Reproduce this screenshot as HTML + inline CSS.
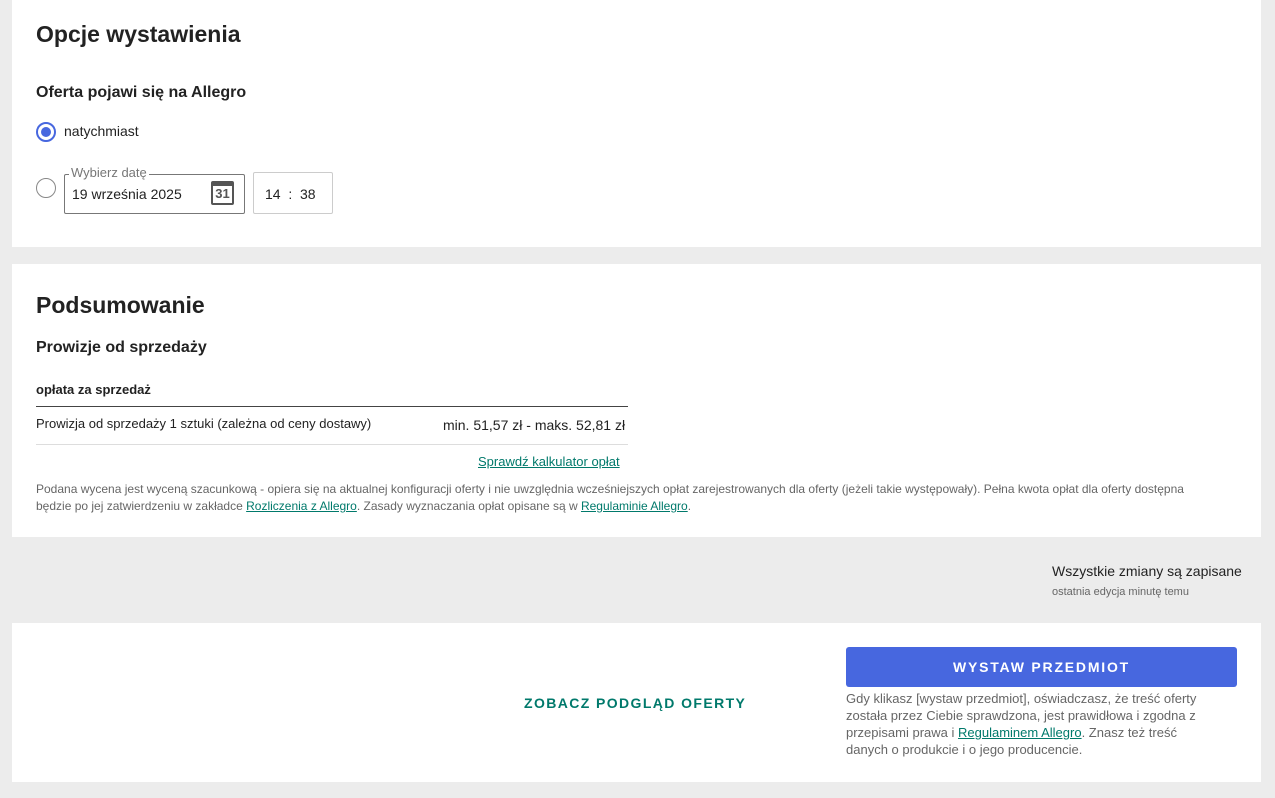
<!DOCTYPE html>
<html><head><meta charset="utf-8"><style>
*{box-sizing:border-box;margin:0;padding:0}
body{width:1275px;height:798px;background:#ececec;font-family:"Liberation Sans",sans-serif;color:#222;position:relative;overflow:hidden}
.card{position:absolute;left:12px;width:1249px;background:#fff}
.a{position:absolute;white-space:nowrap}
h1{position:absolute;font-size:23px;font-weight:bold;color:#222}
h2{position:absolute;font-size:16px;font-weight:bold;color:#222}
a{color:#00796b;text-decoration:underline}
</style></head><body>
<div class="card" style="top:0;height:247px">
<h1 style="left:24px;top:21px">Opcje wystawienia</h1>
<h2 style="left:24px;top:84px">Oferta pojawi się na Allegro</h2>
<div class="a" style="left:24px;top:122px;width:20px;height:20px;border:2px solid #4767df;border-radius:50%"><div style="position:absolute;left:3px;top:3px;width:10px;height:10px;border-radius:50%;background:#4767df"></div></div>
<div class="a" style="left:52px;top:123px;font-size:14px">natychmiast</div>
<div class="a" style="left:24px;top:178px;width:20px;height:20px;border:1px solid #888;border-radius:50%"></div>
<div class="a" style="left:52px;top:174px;width:181px;height:40px;border:1px solid #777;border-radius:2px"></div>
<div class="a" style="left:57px;top:165px;font-size:13px;color:#777;background:#fff;padding:0 2px">Wybierz datę</div>
<div class="a" style="left:60px;top:186px;font-size:14px">19 września 2025</div>
<div class="a" style="left:199px;top:181px;width:23px;height:24px;border:2px solid #555;border-top:5px solid #555;border-radius:2px;font-size:13px;font-weight:bold;color:#555;text-align:center;line-height:16px">31</div>
<div class="a" style="left:241px;top:172px;width:80px;height:42px;border:1px solid #ccc;border-radius:2px"></div>
<div class="a" style="left:253px;top:186px;font-size:14px">14 &nbsp;: &nbsp;38</div>
</div>
<div class="card" style="top:264px;height:273px">
<h1 style="left:24px;top:28px">Podsumowanie</h1>
<h2 style="left:24px;top:75px">Prowizje od sprzedaży</h2>
<div class="a" style="left:24px;top:118px;font-size:13px;font-weight:bold">opłata za sprzedaż</div>
<div class="a" style="left:24px;top:142px;width:592px;height:1px;background:#444"></div>
<div class="a" style="left:24px;top:152px;font-size:13px">Prowizja od sprzedaży 1 sztuki (zależna od ceny dostawy)</div>
<div class="a" style="left:431px;top:153px;font-size:14px">min. 51,57 zł - maks. 52,81 zł</div>
<div class="a" style="left:24px;top:180px;width:592px;height:1px;background:#ddd"></div>
<div class="a" style="left:466px;top:190px;font-size:13px"><a>Sprawdź kalkulator opłat</a></div>
<div class="a" style="left:24px;top:217px;font-size:12px;color:#666;line-height:17px;white-space:normal;width:1180px">Podana wycena jest wyceną szacunkową - opiera się na aktualnej konfiguracji oferty i nie uwzględnia wcześniejszych opłat zarejestrowanych dla oferty (jeżeli takie występowały). Pełna kwota opłat dla oferty dostępna będzie po jej zatwierdzeniu w zakładce <a>Rozliczenia z Allegro</a>. Zasady wyznaczania opłat opisane są w <a>Regulaminie Allegro</a>.</div>
</div>
<div class="a" style="left:1052px;top:563px;font-size:14px">Wszystkie zmiany są zapisane</div>
<div class="a" style="left:1052px;top:586px;font-size:11px;color:#666">ostatnia edycja minutę temu</div>
<div class="card" style="top:623px;height:159px">
<div class="a" style="left:512px;top:72px;font-size:14px;font-weight:bold;letter-spacing:1.4px;color:#00796b">ZOBACZ PODGLĄD OFERTY</div>
<div class="a" style="left:834px;top:24px;width:391px;height:40px;background:#4767df;border-radius:3px;color:#fff;font-size:14px;font-weight:bold;letter-spacing:1.8px;text-align:center;line-height:40px">WYSTAW PRZEDMIOT</div>
<div class="a" style="left:834px;top:67px;width:360px;white-space:normal;font-size:13px;line-height:17px;color:#666">Gdy klikasz [wystaw przedmiot], oświadczasz, że treść oferty została przez Ciebie sprawdzona, jest prawidłowa i zgodna z przepisami prawa i <a>Regulaminem Allegro</a>. Znasz też treść danych o produkcie i o jego producencie.</div>
</div>
</body></html>
